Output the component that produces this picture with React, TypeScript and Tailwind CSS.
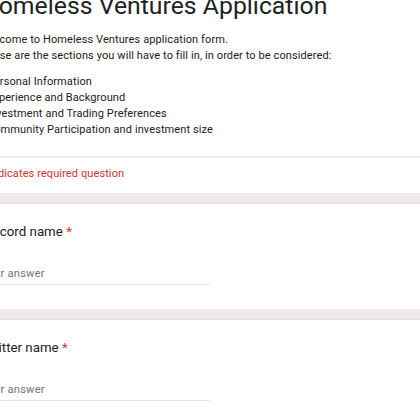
import React from "react";

const sections = [
  "- Personal Information",
  "- Experience and Background",
  "- Investment and Trading Preferences",
  "- Community Participation and investment size",
];

function Band() {
  return <div className="h-[11px] w-full border-b border-[#e4dede] bg-[#efeaea]" />;
}

function Question({ label }: { label: string }) {
  return (
    <div className="pt-[18px]">
      <div className="text-[13.3px] leading-[20px] text-[#202124]">
        {label} <span className="text-[#d93025]">*</span>
      </div>
      <div className="mt-[24px] w-[229px]">
        <div className="text-[11.2px] leading-[16px] tracking-[0.2px] text-[#70757a]">
          Your answer
        </div>
        <div className="mt-[2px] h-[1px] w-full bg-[#e6e6e6]" />
      </div>
      <div className="h-[24px]" />
    </div>
  );
}

export default function App() {
  return (
    <div className="h-[420px] w-[420px] overflow-hidden bg-white font-['Roboto',sans-serif]">
      <div className="ml-[-19px] w-[439px]">
        <h1 className="mt-[-7px] whitespace-nowrap text-[24.8px] leading-[25px] text-[#202124]">
          Homeless Ventures Application
        </h1>
        <div className="mt-[14px] text-[11px] leading-[16px] tracking-[0.1px] text-[#202124]">
          <p>Welcome to Homeless Ventures application form.</p>
          <p>These are the sections you will have to fill in, in order to be considered:</p>
          <div className="mt-[10px]">
            {sections.map((s) => (
              <p key={s}>{s}</p>
            ))}
          </div>
        </div>
        <div className="mt-[18px] ml-[19px] h-[2px] bg-[#f0f0f0]" />
        <div className="mt-[8px] pb-[11px] text-[11px] leading-[16px] tracking-[0.1px] text-[#d93025]">
          * Indicates required question
        </div>
      </div>
      <Band />
      <div className="ml-[-19px]">
        <Question label="Discord name" />
      </div>
      <Band />
      <div className="ml-[-19px]">
        <Question label="Twitter name" />
      </div>
    </div>
  );
}
